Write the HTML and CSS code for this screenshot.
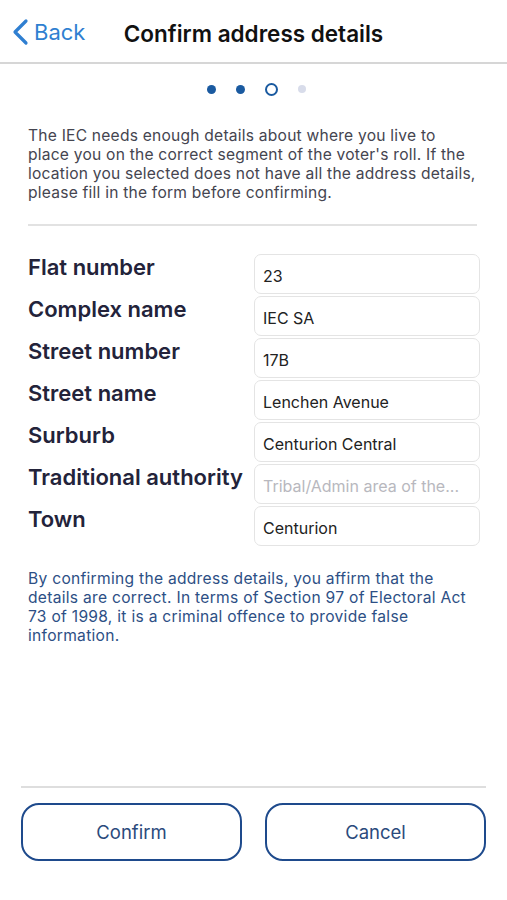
FILE: index.html
```html
<!DOCTYPE html>
<html lang="en">
<head>
    <meta charset="UTF-8">
    <meta name="viewport" content="width=device-width, initial-scale=1.0">
    <title>Confirm address details</title>
    <link rel="stylesheet" href="styles.css">
</head>
<body>

<div class="screen">
    <div class="nav-bar">
        <a class="back-btn" href="#">
            <svg width="20" height="28" viewBox="0 0 20 28">
                <path d="M16 3 L5 14 L16 25" fill="none" stroke="#2f7fd1" stroke-width="3.2" stroke-linecap="round" stroke-linejoin="round"/>
            </svg>
            <span>Back</span>
        </a>
        <div class="nav-title">Confirm address details</div>
    </div>

    <div class="steps">
        <span class="dot done"></span>
        <span class="dot done"></span>
        <span class="dot current"></span>
        <span class="dot todo"></span>
    </div>

    <p class="intro">The IEC needs enough details about where you live to place you on the correct segment of the voter's roll. If the location you selected does not have all the address details, please fill in the form before confirming.</p>

    <div class="divider"></div>

    <div class="address-form">
        <div class="field">
            <label>Flat number</label>
            <input type="text" value="23">
        </div>
        <div class="field">
            <label>Complex name</label>
            <input type="text" value="IEC SA">
        </div>
        <div class="field">
            <label>Street number</label>
            <input type="text" value="17B">
        </div>
        <div class="field">
            <label>Street name</label>
            <input type="text" value="Lenchen Avenue">
        </div>
        <div class="field">
            <label>Surburb</label>
            <input type="text" value="Centurion Central">
        </div>
        <div class="field">
            <label>Traditional authority</label>
            <input type="text" placeholder="Tribal/Admin area of the...">
        </div>
        <div class="field">
            <label>Town</label>
            <input type="text" value="Centurion">
        </div>
    </div>

    <p class="disclaimer">By confirming the address details, you affirm that the details are correct. In terms of Section 97 of Electoral Act 73 of 1998, it is a criminal offence to provide false information.</p>

    <div class="actions">
        <button class="action-btn">Confirm</button>
        <button class="action-btn">Cancel</button>
    </div>
</div>

</body>
</html>
```

FILE: styles.css
```css
body {
    margin: 0;
    background-color: #fff;
    font-family: Inter, "Noto Sans", sans-serif;
    color: #111;
}

.screen {
    width: 507px;
    height: 900px;
    display: flex;
    flex-direction: column;
}

.nav-bar {
    height: 62px;
    border-bottom: 2px solid #d6d6d6;
    display: flex;
    align-items: center;
    justify-content: center;
    position: relative;
    box-sizing: content-box;
}

.back-btn {
    position: absolute;
    left: 10px;
    top: 18px;
    display: flex;
    align-items: center;
    gap: 4px;
    color: #2f7fd1;
    text-decoration: none;
    font-size: 22px;
}

.nav-title {
    font-size: 22.5px;
    font-weight: 600;
    color: #111;
    margin-top: 4px;
}

.steps {
    display: flex;
    justify-content: center;
    align-items: center;
    height: 24px;
    margin-top: 13px;
    padding-left: 6px;
}

.dot {
    display: block;
    border-radius: 50%;
    margin: 0 10px;
}

.dot.done {
    width: 9px;
    height: 9px;
    background-color: #1a5aa0;
}

.dot.current {
    width: 9px;
    height: 9px;
    border: 2.5px solid #1a5aa0;
}

.dot.todo {
    width: 8px;
    height: 8px;
    background-color: #d8dcea;
}

.intro {
    margin: 25px 27px 0 28px;
    font-size: 15.6px;
    line-height: 19px;
    letter-spacing: 0.22px;
    color: #454550;
}

.divider {
    height: 2px;
    background-color: #e2e2e2;
    margin: 22px 30px 0 28px;
}

.address-form {
    margin-top: 28px;
    display: flex;
    flex-direction: column;
    gap: 2px;
}

.field {
    display: flex;
    align-items: flex-start;
    padding-left: 28px;
}

.field label {
    width: 226px;
    font-size: 22px;
    font-weight: 600;
    color: #23233a;
    white-space: nowrap;
}

.field input {
    width: 226px;
    height: 40px;
    box-sizing: border-box;
    border: 1.5px solid #e4e4e4;
    border-radius: 7px;
    padding: 3px 8px 0 8px;
    font-family: Inter, "Noto Sans", sans-serif;
    font-size: 16px;
    color: #222;
    background-color: #fff;
}

.field input::placeholder {
    color: #b8b8be;
}

.disclaimer {
    margin: 23px 28px 0 28px;
    font-size: 15.6px;
    line-height: 19px;
    letter-spacing: 0.28px;
    color: #2d4f85;
}

.actions {
    margin: auto 21px 39px 21px;
    border-top: 2px solid #dedede;
    padding-top: 15px;
    display: flex;
    justify-content: space-between;
}

.action-btn {
    width: 221px;
    height: 58px;
    border: 2.5px solid #1e4a8c;
    border-radius: 18px;
    background-color: #fff;
    color: #2b4a7c;
    font-family: Inter, "Noto Sans", sans-serif;
    font-size: 18.5px;
    cursor: pointer;
}
```
